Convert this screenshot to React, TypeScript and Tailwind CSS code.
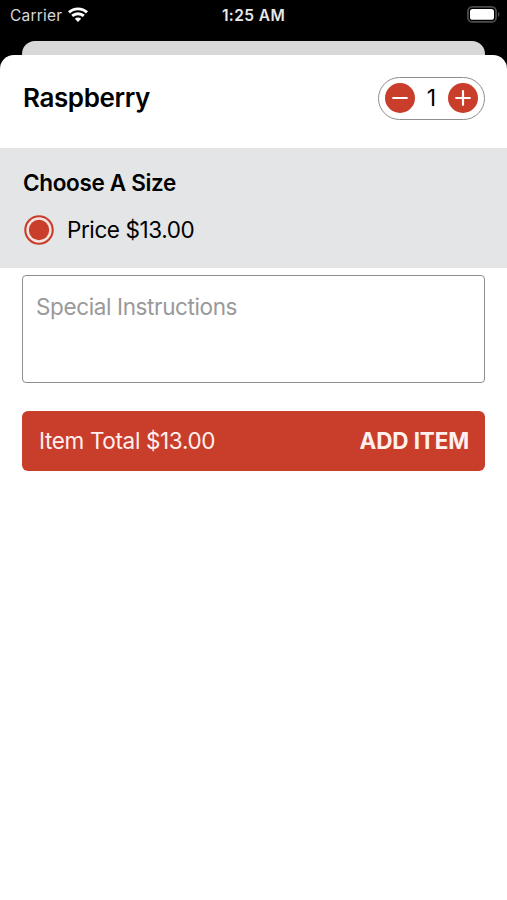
import React, { useState } from 'react';

const UNIT_PRICE = 13;

function WifiIcon() {
  return (
    <svg width="20" height="15" viewBox="0 0 20 15" fill="none" stroke="#fff" strokeWidth="2.9">
      <path d="M1 5.4C6 0.7 14 0.7 19 5.4" />
      <path d="M4.2 8.9C7.4 6 12.6 6 15.8 8.9" />
      <path d="M10 15L6.8 11.8C8.6 10.2 11.4 10.2 13.2 11.8Z" fill="#fff" stroke="none" />
    </svg>
  );
}

function BatteryIcon() {
  return (
    <svg width="33" height="17" viewBox="0 0 33 17">
      <rect x="0.9" y="0.9" width="28.2" height="15" rx="4.5" fill="none" stroke="#4b4b4b" strokeWidth="1.8" />
      <rect x="3" y="3" width="24" height="10.8" rx="2.6" fill="#fff" />
      <path d="M31 5.8C32.9 6.6 32.9 10.2 31 11Z" fill="#4b4b4b" />
    </svg>
  );
}

function StatusBar() {
  return (
    <div className="grid h-[41px] grid-cols-3 items-start bg-black text-white">
      <div className="flex items-start pl-[10px] pt-[6px]">
        <span className="text-[15.5px] leading-[19px] tracking-[0.2px] text-[#d8d8d8]">Carrier</span>
        <span className="ml-[6px] pt-px">
          <WifiIcon />
        </span>
      </div>
      <div className="pt-[6px] text-center text-[15.5px] font-semibold leading-[19px] tracking-[0.4px] text-[#e8e8e8]">
        1:25 AM
      </div>
      <div className="flex justify-end pr-[7px] pt-[6px]">
        <BatteryIcon />
      </div>
    </div>
  );
}

type StepButtonProps = {
  label: string;
  onClick: () => void;
  path: string;
};

function StepButton({ label, onClick, path }: StepButtonProps) {
  return (
    <button type="button" aria-label={label} onClick={onClick} className="h-[30px] w-[30px] rounded-full bg-[#c93d2b]">
      <svg width="30" height="30" viewBox="0 0 30 30" fill="none" stroke="#fff" strokeWidth="2.2" strokeLinecap="round">
        <path d={path} />
      </svg>
    </button>
  );
}

export default function App() {
  const [quantity, setQuantity] = useState(1);
  const [instructions, setInstructions] = useState('');

  return (
    <div className="flex h-[900px] w-full flex-col overflow-hidden bg-black font-['Inter','Liberation_Sans',sans-serif] text-black">
      <StatusBar />

      {/* Edge of the screen stacked behind the sheet */}
      <div className="mx-[22px] h-[14px] shrink-0 rounded-t-[13px] bg-[#d8d8d8]" />

      <div className="flex-1 rounded-t-[14px] bg-white">
        <div className="flex h-[93px] items-center justify-between pl-[23px] pr-[22px] pb-[7px]">
          <h1 className="text-[26px] font-semibold leading-8 tracking-[-0.4px]">Raspberry</h1>
          <div className="flex h-[43px] w-[107px] items-center justify-between rounded-full border border-[#8e8e8e] px-[6px]">
            <StepButton label="Decrease" onClick={() => setQuantity(Math.max(1, quantity - 1))} path="M8.2 15H21.8" />
            <span className="text-[23px] leading-7">{quantity}</span>
            <StepButton label="Increase" onClick={() => setQuantity(quantity + 1)} path="M8.2 15H21.8M15 8.2V21.8" />
          </div>
        </div>

        <div className="h-[120px] bg-[#e3e5e6] pl-[23px] pt-[21px]">
          <h2 className="text-[22.5px] font-semibold leading-7 tracking-[-0.33px]">Choose A Size</h2>
          <label className="mt-[18px] flex items-center">
            <svg width="32" height="30" viewBox="0 0 32 30">
              <circle cx="16" cy="15" r="13.7" fill="#f4e4e1" stroke="#c93d2b" strokeWidth="2.1" />
              <circle cx="16" cy="15" r="10.2" fill="#c93d2b" />
            </svg>
            <span className="ml-[12px] text-[22.5px] leading-7 tracking-[-0.42px]">Price ${UNIT_PRICE.toFixed(2)}</span>
          </label>
        </div>

        <div className="px-[22px] pt-[7px]">
          <textarea
            value={instructions}
            onChange={(e) => setInstructions(e.target.value)}
            placeholder="Special Instructions"
            className="block h-[108px] w-full resize-none rounded-[4px] border border-[#8e8e8e] px-[13px] pt-[17px] text-[22.5px] leading-7 tracking-[-0.38px] outline-none placeholder:text-[#999]"
          />
          <button
            type="button"
            className="mt-[28px] flex h-[60px] w-full items-center justify-between rounded-[6px] bg-[#c93d2b] pl-[17px] pr-[16px] text-[22.5px] leading-7 text-[#fff0ee]"
          >
            <span className="tracking-[-0.35px]">Item Total ${(UNIT_PRICE * quantity).toFixed(2)}</span>
            <span className="font-bold tracking-[-0.15px]">ADD ITEM</span>
          </button>
        </div>
      </div>
    </div>
  );
}
